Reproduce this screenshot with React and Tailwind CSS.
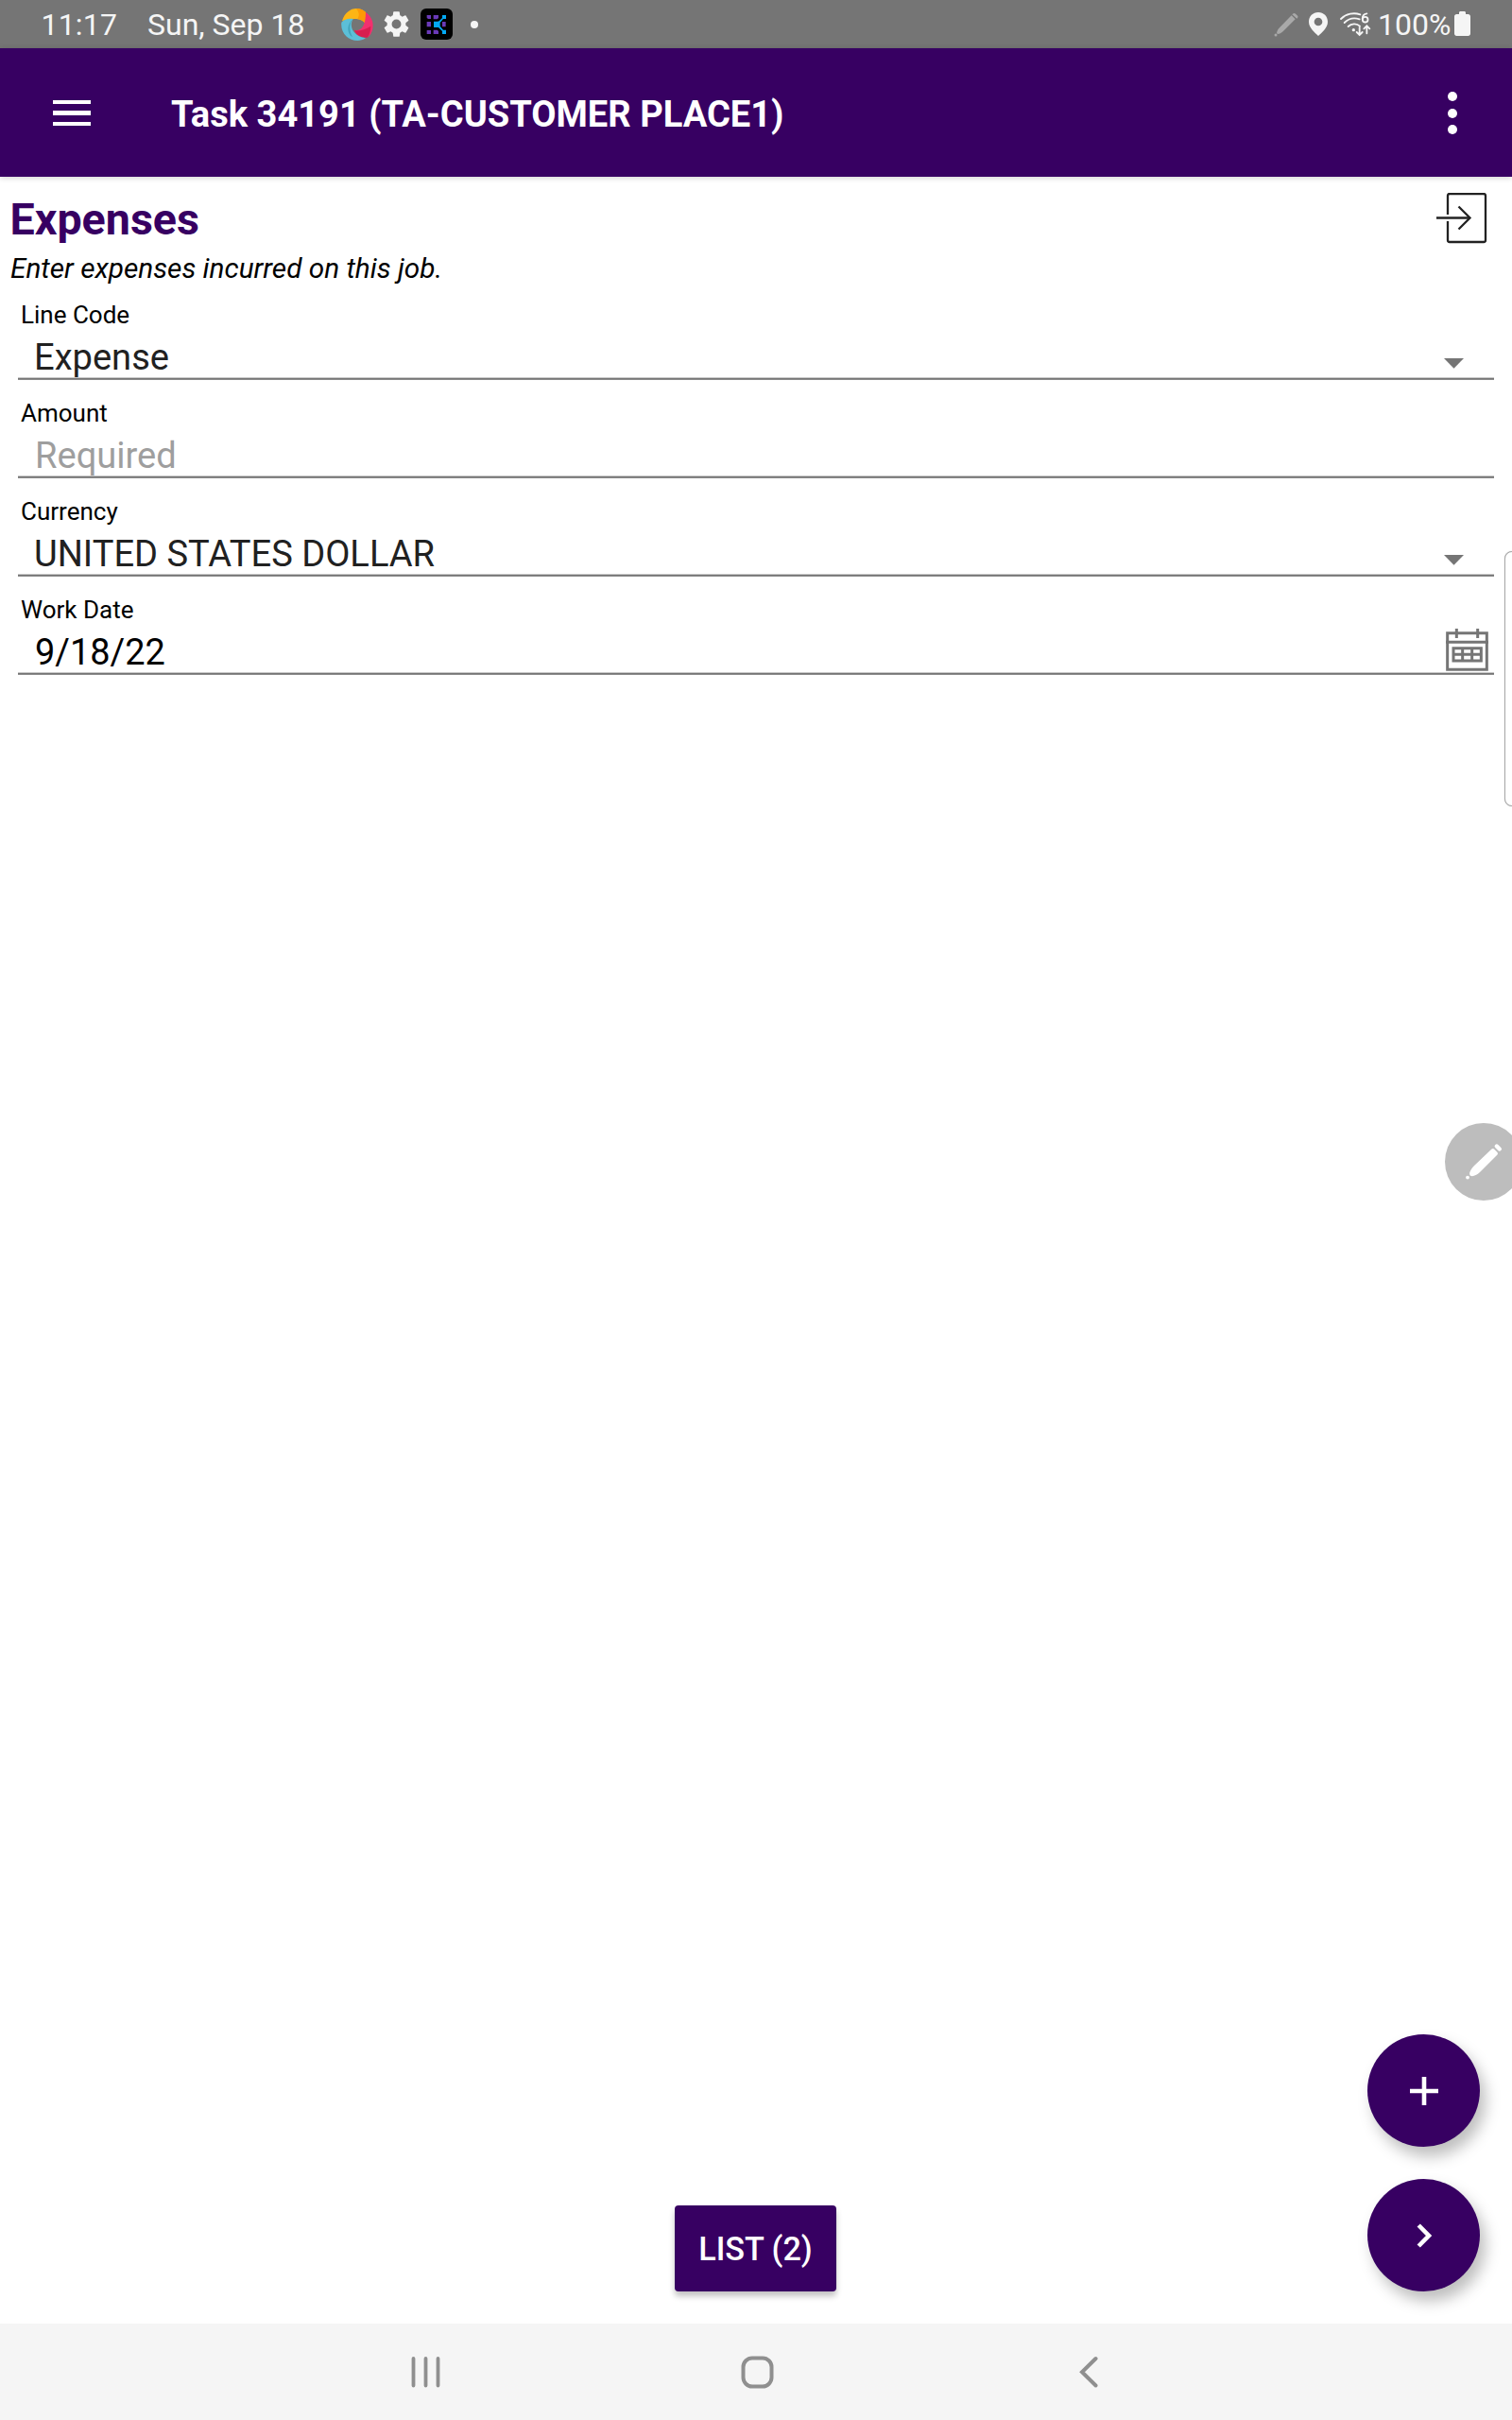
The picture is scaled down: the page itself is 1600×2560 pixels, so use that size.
import React from "react";

function SwirlIcon() {
  return (
    <svg width="34" height="34" viewBox="0 0 102 102">
      <path d="M3 40C10 14 30 0 48 0c12 0 22 4 30 12l-1 36C68 34 46 26 3 40z" fill="#fdb515" />
      <path d="M48 0c12 0 22 4 30 12l-1 36C71 39 63 34 52 32c8-10 4-22-4-32z" fill="#fe9a06" />
      <path d="M78 12c14 10 23 24 23 40 0 18-6 30-14 38C66 92 50 88 42 70c22 2 36-14 36-58z" fill="#f2306e" />
      <path d="M42 70c18 2 36-4 52-14 0 14-4 26-10 36-16 2-34-4-42-22z" fill="#d71f4f" />
      <path d="M1 44c10-10 22-13 37-11-8 12-8 30 4 43 8 10 20 16 36 18-8 6-17 8-26 8C22 102-3 76 1 44z" fill="#5cbfd8" />
      <path d="M38 33c-12 12-14 34-2 58C18 80 16 50 38 33z" fill="#42a5bd" />
    </svg>
  );
}

function GearIcon() {
  return (
    <svg width="33" height="33" viewBox="0 0 24 24" fill="#f5f5f5">
      <path d="M19.14 12.94c.04-.3.06-.61.06-.94 0-.32-.02-.64-.07-.94l2.03-1.58a.49.49 0 0 0 .12-.61l-1.92-3.32a.488.488 0 0 0-.59-.22l-2.39.96c-.5-.38-1.03-.7-1.62-.94l-.36-2.54a.484.484 0 0 0-.48-.41h-3.84c-.24 0-.43.17-.47.41l-.36 2.54c-.59.24-1.13.57-1.62.94l-2.39-.96c-.22-.08-.47 0-.59.22L2.740 8.870c-.12.21-.08.47.12.61l2.03 1.580c-.05.3-.09.63-.09.94s.02.64.07.94l-2.030 1.580a.49.49 0 0 0-.12.61l1.920 3.320c.12.22.37.29.59.22l2.390-.96c.5.38 1.030.7 1.620.94l.36 2.540c.05.24.24.41.48.41h3.840c.24 0 .44-.17.47-.41l.36-2.540c.59-.24 1.130-.56 1.620-.94l2.390.96c.22.08.47 0 .59-.22l1.920-3.320c.12-.22.07-.47-.12-.61l-2.010-1.580zM12 15.600A3.600 3.600 0 1 1 12 8.400a3.600 3.600 0 0 1 0 7.200z" />
    </svg>
  );
}

function KnoxIcon() {
  return (
    <svg width="34" height="33" viewBox="0 0 102 99">
      <rect width="102" height="99" rx="18" fill="#000" />
      <path d="M20 21h13v12H24l-4-4zM41 21h16v9l-4 4H41zM20 42h13v16H20zM69 42h11v16H69zM20 69h13v12H20zM41 68h12l4 4v9H41z" fill="#6a3ab8" />
      <path d="M42 41h12l5-1 10-10v-9h12v12H72L62 45v11l10 12h9v13H69v-9L57 60H42z" fill="#03a9f4" />
    </svg>
  );
}

function StylusIcon() {
  return (
    <svg width="26" height="26" viewBox="0 0 78 78" fill="#a9a9a9">
      <path d="M56 10l12 12-39 39c-5 5-11 8-17 8l-3-3c1-6 4-12 9-17z" />
      <path d="M60 5c3-3 6-3 9 0l5 5c3 3 3 5 1 8l-2 2L58 7z" />
      <circle cx="6" cy="72" r="4.500" />
    </svg>
  );
}

function PinIcon() {
  return (
    <svg width="20" height="25" viewBox="0 0 60 75">
      <path fillRule="evenodd" d="M30 0C13 0 0 13 0 30c0 20 18 33 30 45 12-12 30-25 30-45C60 13 47 0 30 0zm0 17a13 13 0 1 1 0 26 13 13 0 0 1 0-26z" fill="#f5f5f5" />
    </svg>
  );
}

function WifiIcon() {
  return (
    <svg width="33" height="26" viewBox="0 0 99 78" fill="none" stroke="#f5f5f5" strokeWidth="5.500" strokeLinecap="round">
      <path d="M3 21C20 4 44 0 64 7" />
      <path d="M14 33C28 19 45 16 62 22" />
      <path d="M26 45c10-10 27-11 37-1" />
      <path d="M85 4c-8 1-14 8-14 17" />
      <circle cx="80" cy="23" r="8.500" />
      <circle cx="43" cy="56" r="5" fill="#f5f5f5" stroke="none" />
      <path d="M62 48v23M53 63l9 9 9-9M85 67V44M76 52l9-9 9 9" />
    </svg>
  );
}

function BatteryIcon() {
  return (
    <svg width="17" height="26" viewBox="0 0 17 26" fill="#f5f5f5">
      <path d="M5 1.500C5 .6 5.600 0 6.500 0h4c.9 0 1.500.6 1.500 1.500V3h2.500C16 3 17 4 17 5.500v18c0 1.500-1 2.500-2.500 2.500h-12C1 26 0 25 0 23.500v-18C0 4 1 3 2.500 3H5z" />
    </svg>
  );
}

function StatusBar() {
  return (
    <header className="flex h-[51px] items-start justify-between bg-[#757575] pl-[43.500px] pr-11 text-[32px] leading-[53px] text-[#f5f5f5]">
      <div className="flex">
        <span className="w-[112.500px] whitespace-nowrap tracking-[0.2px]">11:17</span>
        <span className="w-[205px] whitespace-nowrap">Sun, Sep 18</span>
        <div className="flex h-[51px] items-center">
          <SwirlIcon />
          <div className="ml-2"><GearIcon /></div>
          <div className="ml-[9px]"><KnoxIcon /></div>
          <span className="ml-[19px] size-2 rounded-full bg-[#f5f5f5]" />
        </div>
      </div>
      <div className="flex">
        <div className="flex h-[51px] items-center">
          <StylusIcon />
          <div className="ml-[11px]"><PinIcon /></div>
          <div className="ml-[13px]"><WifiIcon /></div>
        </div>
        <span className="ml-[7px] w-[81px] whitespace-nowrap">100%</span>
        <div className="pt-3"><BatteryIcon /></div>
      </div>
    </header>
  );
}

function AppBar() {
  return (
    <div className="relative z-10 flex h-[136px] items-start bg-[#370062] pl-14 pr-[58.500px] text-white shadow-[0_1px_6px_rgba(0,0,0,0.2)]">
      <button className="mt-[55px] flex w-10 flex-col gap-[7px]" aria-label="Menu">
        <span className="h-[4.300px] w-full bg-white" />
        <span className="h-[4.300px] w-full bg-white" />
        <span className="h-[4.300px] w-full bg-white" />
      </button>
      <h1 className="ml-[85px] flex-1 text-[38.100px] font-bold leading-[141px]">Task 34191 (TA-CUSTOMER PLACE1)</h1>
      <button className="mt-[46px] flex flex-col gap-[7.500px]" aria-label="More options">
        <span className="size-[10px] rounded-full bg-white" />
        <span className="size-[10px] rounded-full bg-white" />
        <span className="size-[10px] rounded-full bg-white" />
      </button>
    </div>
  );
}

function EnterIcon() {
  return (
    <svg width="54" height="54" viewBox="0 0 54 54" fill="none" stroke="#222" strokeWidth="2.300">
      <path d="M12 23V3q0-2 2-2h36q2 0 2 2v47q0 2-2 2H14q-2 0-2-2V30" />
      <path d="M0 26.500h35" />
      <path d="M23.500 14.500l12 12-12 12" />
    </svg>
  );
}

function Caret() {
  return (
    <svg className="mr-8 mt-[27px]" width="21" height="11" viewBox="0 0 21 11">
      <path d="M0 0h21L10.500 10.700z" fill="#757575" />
    </svg>
  );
}

function CalendarIcon() {
  return (
    <svg className="mr-[6px] mt-px" width="45" height="45" viewBox="0 0 135 135" fill="none" stroke="#757575">
      <path d="M5 14h125v116H5zM0 43h135" strokeWidth="9" />
      <path d="M34 0v30M101 0v30" strokeWidth="9" />
      <path d="M24 62h88v40H24zM24 82h88M53 58v46M83 58v46" strokeWidth="9" />
    </svg>
  );
}

function Field({ label, children, icon }) {
  return (
    <div className="ml-[19px] mr-[19px] h-[104px]">
      <div className="h-[54px] pl-[3px] pt-[17px] text-[26px] leading-[36px] text-black">{label}</div>
      <div className="flex h-[47px] items-start justify-between text-[38.100px] leading-[52px]">
        {children}
        {icon}
      </div>
      <div className="h-[3px] border-b border-t border-b-[#8c8c8c] border-t-[#c8c8c8] bg-[#757575]" />
    </div>
  );
}

function Fab({ label, children }) {
  return (
    <button aria-label={label} className="flex size-[119px] items-center justify-center rounded-full bg-[#370062] shadow-[6px_10px_16px_rgba(0,0,0,0.26)]">
      {children}
    </button>
  );
}

export default function App() {
  return (
    <div className="relative flex h-[2560px] w-[1600px] flex-col overflow-hidden bg-white font-[Roboto,sans-serif]">
      <StatusBar />
      <AppBar />
      <main className="flex flex-1 flex-col">
        <div className="flex h-[73px] items-start justify-between pl-[10.500px] pr-[26px] pt-[17px]">
          <h2 className="text-[46.600px] font-bold leading-[56px] text-[#370062]">Expenses</h2>
          <EnterIcon />
        </div>
        <p className="h-[38px] pl-[11px] text-[29.750px] italic leading-[48px] text-black">Enter expenses incurred on this job.</p>
        <Field label="Line Code" icon={<Caret />}>
          <span className="pl-[17px] text-[#212121]">Expense</span>
        </Field>
        <Field label="Amount">
          <span className="pl-[18px] text-[#9e9e9e]">Required</span>
        </Field>
        <Field label="Currency" icon={<Caret />}>
          <span className="pl-[17px] text-[#212121]">UNITED STATES DOLLAR</span>
        </Field>
        <Field label="Work Date" icon={<CalendarIcon />}>
          <span className="pl-[18px] text-[37.900px] text-black">9/18/22</span>
        </Field>
        <button className="mb-[34px] ml-[714px] mt-auto h-[91px] w-[171px] rounded-[4px] bg-[#370062] pt-[2px] text-[34.200px] font-medium text-white shadow-[0_5px_6px_rgba(0,0,0,0.24)]">
          LIST (2)
        </button>
      </main>
      <nav className="flex h-[102px] items-start bg-[#f5f5f5] pl-[435px] pt-[34px]">
        <svg width="31" height="34" viewBox="0 0 31 34" stroke="#8f8f8f" strokeWidth="3.800" strokeLinecap="round">
          <path d="M2.500 3v28.500M15.500 3v28.500M28.500 3v28.500" />
        </svg>
        <svg className="ml-[318px]" width="35" height="35" viewBox="0 0 35 35" fill="none" stroke="#8f8f8f" strokeWidth="4">
          <rect x="2.500" y="2.500" width="30" height="30" rx="9.500" />
        </svg>
        <svg className="ml-[322px]" width="22" height="34" viewBox="0 0 22 34" fill="none" stroke="#8f8f8f" strokeWidth="4" strokeLinecap="round">
          <path d="M18.500 3L4 17.300l14.500 14.200" />
        </svg>
      </nav>

      <div className="absolute -right-2 top-[583px] h-[270px] w-4 rounded-[8px] border-[1.500px] border-[#a8a8a8] bg-white shadow-[0_0_1px_#aaa]" />
      <div className="absolute -right-[11px] top-[1188px] size-[82px] rounded-full bg-[#bdbdbd]">
        <svg width="82" height="82" viewBox="0 0 82 82" fill="#fff">
          <path d="M49.500 27.500q1.500-1 2.500 0l3.500 3.500q1 1 0 2.500L37 52c-2.500 2.500-6 4-8 4.200q-1.500 0-2.300-.8t-.6-2.300c.5-2 2-5 4.500-7.500z" />
          <rect x="-4.300" y="-2.200" width="8.600" height="4.400" rx="2.200" transform="translate(56.300 26) rotate(45)" />
          <circle cx="24" cy="57.600" r="1.900" />
        </svg>
      </div>
      <div className="absolute right-[34px] top-[2152px] flex flex-col gap-[34px]">
        <Fab label="Add">
          <svg width="30" height="30" viewBox="0 0 30 30" stroke="#fff" strokeWidth="4.600">
            <path d="M15 0v30M0 15h30" />
          </svg>
        </Fab>
        <Fab label="Next">
          <svg width="18" height="26" viewBox="0 0 18 26" fill="none" stroke="#fff" strokeWidth="4.600">
            <path d="M3.200 2L14 13 3.200 24" />
          </svg>
        </Fab>
      </div>
    </div>
  );
}
